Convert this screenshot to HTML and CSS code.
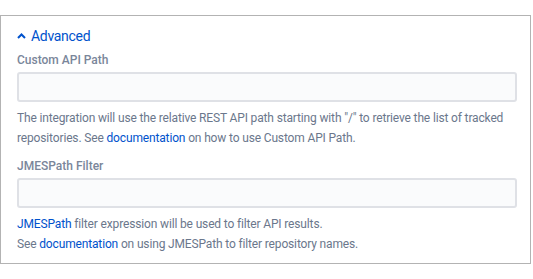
FILE: index.html
```html
<!DOCTYPE html>
<html lang="en">
<head>
  <meta charset="UTF-8" />
  <title>Advanced settings</title>
  <link rel="stylesheet" href="styles.css">
</head>
<body>
  <div class="panel">
    <button class="toggle" type="button">
      <svg class="chevron" width="9" height="6" viewBox="0 0 9 6">
        <path d="M1 5 L4.5 1.5 L8 5" fill="none" stroke="#0052cc" stroke-width="2" stroke-linejoin="miter"/>
      </svg>
      Advanced
    </button>

    <div class="field">
      <label class="field-label" for="api-path">Custom API Path</label>
      <input class="field-input" id="api-path" type="text" />
      <p class="field-help">
        The integration will use the relative REST API path starting with "/" to retrieve the list of tracked
        repositories. See <a href="#">documentation</a> on how to use Custom API Path.
      </p>
    </div>

    <div class="field">
      <label class="field-label" for="jmes-filter">JMESPath Filter</label>
      <input class="field-input" id="jmes-filter" type="text" />
      <p class="field-help">
        <a href="#">JMESPath</a> filter expression will be used to filter API results.<br>
        See <a href="#">documentation</a> on using JMESPath to filter repository names.
      </p>
    </div>
  </div>
</body>
</html>
```

FILE: styles.css
```css
body {
  margin: 0;
  font-family: Roboto, "Noto Sans", sans-serif;
  background-color: #ffffff;
  color: #6b778c;
}

.panel {
  margin-top: 15px;
  width: 531px;
  height: 249px;
  box-sizing: border-box;
  border: 1px solid #b3b3b3;
  padding: 10px 0 8px 16px;
}

.toggle {
  display: flex;
  align-items: center;
  gap: 5px;
  background: none;
  border: none;
  padding: 0;
  font-family: inherit;
  font-size: 14px;
  letter-spacing: -0.3px;
  line-height: 20px;
  color: #0052cc;
  cursor: pointer;
}

.chevron {
  display: block;
}

.field {
  margin-top: 4px;
}

.field + .field {
  margin-top: 8px;
}

.field-label {
  display: block;
  font-size: 12px;
  font-weight: 500;
  line-height: 20px;
  color: #7a869a;
  margin-bottom: 2px;
}

.field-input {
  display: block;
  width: 500px;
  height: 30px;
  box-sizing: border-box;
  border: 2px solid #dfe1e6;
  border-radius: 3px;
  background-color: #fafbfc;
  margin: 0;
}

.field-help {
  margin: 6px 0 0;
  font-size: 12px;
  letter-spacing: -0.15px;
  line-height: 20px;
}

.field-help a {
  color: #0052cc;
  text-decoration: none;
}
```
